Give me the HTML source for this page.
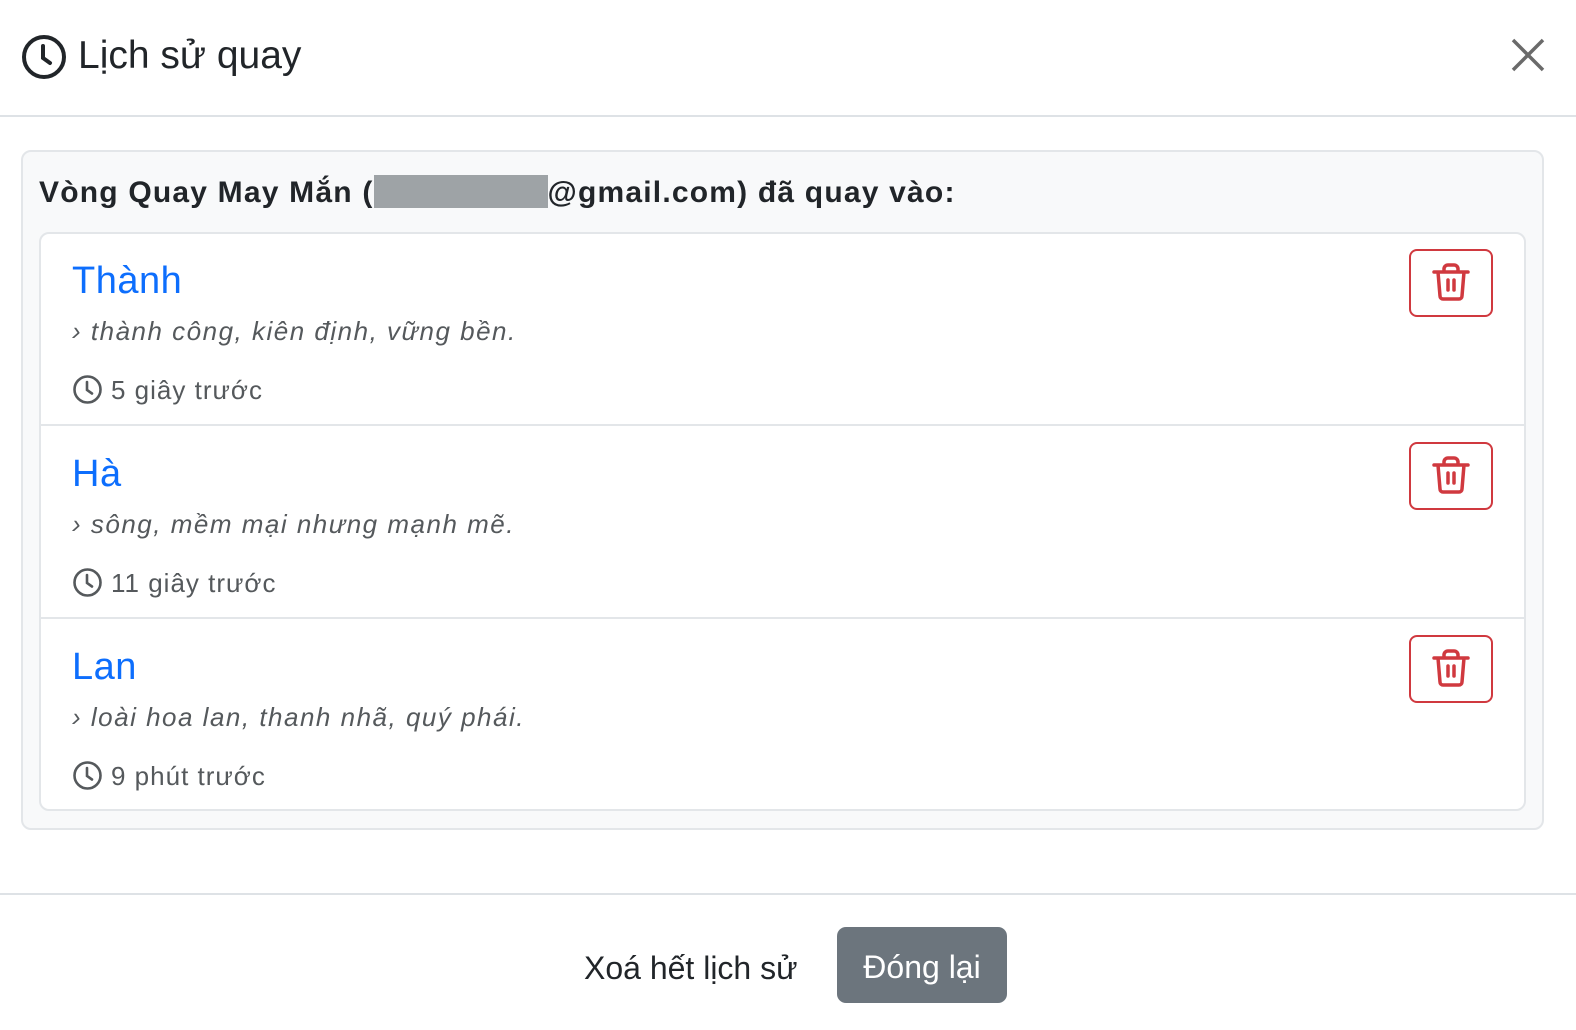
<!DOCTYPE html>
<html><head><meta charset="utf-8"><style>
*{margin:0;padding:0;box-sizing:border-box}
body{width:1576px;height:1030px;background:#fff;font-family:"Liberation Sans",sans-serif;color:#212529;position:relative;overflow:hidden}
.a{position:absolute;white-space:nowrap}
.hdr{left:0;top:115px;width:1576px;height:2px;background:#dee2e6}
.ftr{left:0;top:893px;width:1576px;height:2px;background:#dee2e6}
.card{left:21px;top:150px;width:1523px;height:680px;background:#f8f9fa;border:2px solid #e3e6e9;border-radius:10px}
.list{left:39px;top:232px;width:1487px;height:579px;background:#fff;border:2px solid #e3e6e9;border-radius:10px}
.sep{left:40px;width:1485px;height:2px;background:#e3e6e9}
.name{font-size:38px;color:#0d6efd;left:72px;letter-spacing:0.5px}
.desc{font-size:26px;font-style:italic;color:#55595c;left:72px;letter-spacing:1.5px}
.time{font-size:26px;color:#55595c;left:111px;letter-spacing:1px}
.del{left:1409px;width:84px;height:68px;border:2px solid #d0393f;border-radius:8px}
</style></head><body>
<svg class="a" style="left:21px;top:34px" width="46" height="46" viewBox="0 0 46 46"><circle cx="23" cy="23" r="20" fill="none" stroke="#212529" stroke-width="4"/><path d="M22 12v12l7 5" fill="none" stroke="#212529" stroke-width="4" stroke-linecap="round"/></svg>
<div class="a" style="left:78px;top:34px;font-size:39px;">Lịch sử quay</div>
<svg class="a" style="left:1510px;top:37px" width="36" height="36" viewBox="0 0 36 36"><path d="M3 3L33 33M33 3L3 33" stroke="#6a6a6a" stroke-width="3.5"/></svg>
<div class="a hdr"></div>
<div class="a card"></div>
<div class="a" style="left:39px;top:175px;font-size:30px;font-weight:bold;letter-spacing:1.2px">Vòng Quay May Mắn (<span style="display:inline-block;width:174px;height:33px;background:#9ea3a6;vertical-align:-6px"></span>@gmail.com) đã quay vào:</div>
<div class="a list"></div>
<div class="a sep" style="top:424px"></div>
<div class="a sep" style="top:617px"></div>

<div class="a name" style="top:260px">Thành</div>
<div class="a desc" style="top:316px">› thành công, kiên định, vững bền.</div>
<div class="a time" style="top:375px">5 giây trước</div>

<div class="a name" style="top:453px">Hà</div>
<div class="a desc" style="top:509px">› sông, mềm mại nhưng mạnh mẽ.</div>
<div class="a time" style="top:568px">11 giây trước</div>

<div class="a name" style="top:646px">Lan</div>
<div class="a desc" style="top:702px">› loài hoa lan, thanh nhã, quý phái.</div>
<div class="a time" style="top:761px">9 phút trước</div>

<svg class="a" style="left:72px;top:374px" width="31" height="31" viewBox="0 0 31 31"><circle cx="15.5" cy="15.5" r="13" fill="none" stroke="#55595c" stroke-width="2.6"/><path d="M15 8v8l5 3.5" fill="none" stroke="#55595c" stroke-width="2.6" stroke-linecap="round"/></svg>
<svg class="a" style="left:72px;top:567px" width="31" height="31" viewBox="0 0 31 31"><circle cx="15.5" cy="15.5" r="13" fill="none" stroke="#55595c" stroke-width="2.6"/><path d="M15 8v8l5 3.5" fill="none" stroke="#55595c" stroke-width="2.6" stroke-linecap="round"/></svg>
<svg class="a" style="left:72px;top:760px" width="31" height="31" viewBox="0 0 31 31"><circle cx="15.5" cy="15.5" r="13" fill="none" stroke="#55595c" stroke-width="2.6"/><path d="M15 8v8l5 3.5" fill="none" stroke="#55595c" stroke-width="2.6" stroke-linecap="round"/></svg>

<div class="a del" style="top:249px"></div>
<div class="a del" style="top:442px"></div>
<div class="a del" style="top:635px"></div>
<svg class="a" style="left:1430px;top:262px" width="42" height="42" viewBox="0 0 42 42"><g fill="none" stroke="#d0393f" stroke-width="3.5" stroke-linecap="round" stroke-linejoin="round"><path d="M4 10h34M14 10V7a4 4 0 0 1 4-4h6a4 4 0 0 1 4 4v3M8 10l2 24a3 3 0 0 0 3 3h16a3 3 0 0 0 3-3l2-24M18 18v10M24 18v10"/></g></svg>
<svg class="a" style="left:1430px;top:455px" width="42" height="42" viewBox="0 0 42 42"><g fill="none" stroke="#d0393f" stroke-width="3.5" stroke-linecap="round" stroke-linejoin="round"><path d="M4 10h34M14 10V7a4 4 0 0 1 4-4h6a4 4 0 0 1 4 4v3M8 10l2 24a3 3 0 0 0 3 3h16a3 3 0 0 0 3-3l2-24M18 18v10M24 18v10"/></g></svg>
<svg class="a" style="left:1430px;top:648px" width="42" height="42" viewBox="0 0 42 42"><g fill="none" stroke="#d0393f" stroke-width="3.5" stroke-linecap="round" stroke-linejoin="round"><path d="M4 10h34M14 10V7a4 4 0 0 1 4-4h6a4 4 0 0 1 4 4v3M8 10l2 24a3 3 0 0 0 3 3h16a3 3 0 0 0 3-3l2-24M18 18v10M24 18v10"/></g></svg>

<div class="a ftr"></div>
<div class="a" style="left:584px;top:950px;font-size:32px;">Xoá hết lịch sử</div>
<div class="a" style="left:837px;top:927px;width:170px;height:76px;background:#6c757d;border-radius:9px;color:#fff;font-size:32px;text-align:center;line-height:80px;">Đóng lại</div>
</body></html>
